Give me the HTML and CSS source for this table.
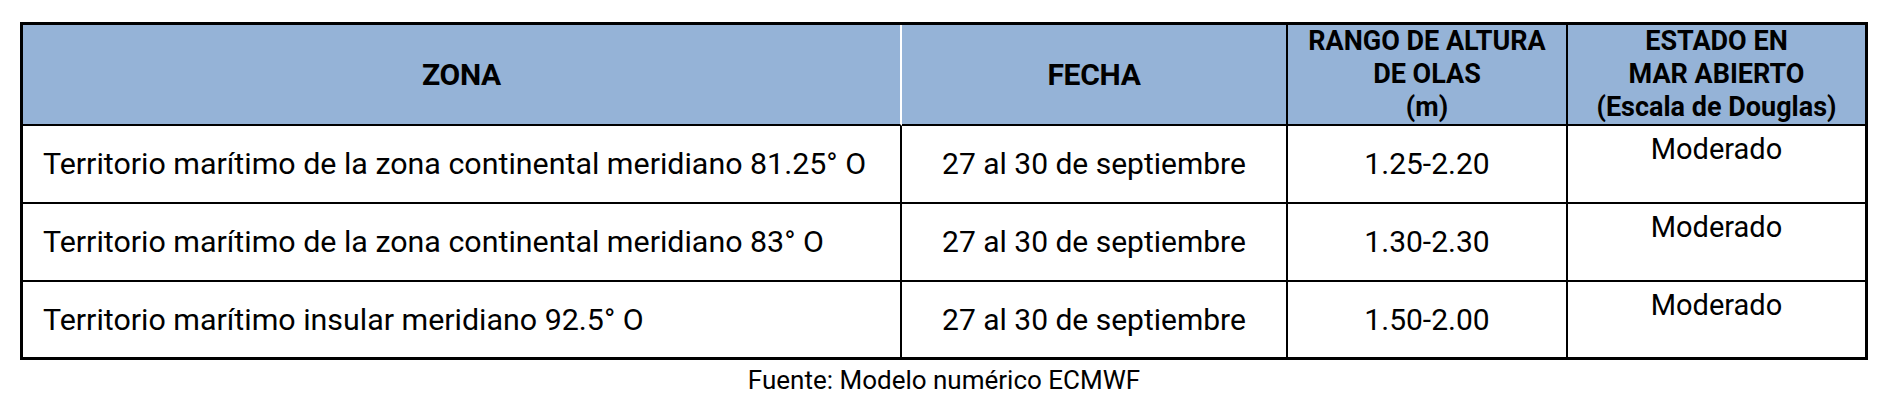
FILE: index.html
```html
<!DOCTYPE html>
<html lang="es">
<head>
<meta charset="utf-8">
<title>Altura de olas</title>
<link rel="stylesheet" href="styles.css">
</head>
<body>
<div class="wrap">
  <table class="waves">
    <colgroup>
      <col class="c-zona">
      <col class="c-fecha">
      <col class="c-rango">
      <col class="c-estado">
    </colgroup>
    <thead>
      <tr class="head-row">
        <th class="h-big h-zona">ZONA</th>
        <th class="h-big">FECHA</th>
        <th class="h-small">RANGO DE ALTURA<br>DE OLAS<br>(m)</th>
        <th class="h-small last">ESTADO EN<br>MAR ABIERTO<br>(Escala de Douglas)</th>
      </tr>
    </thead>
    <tbody>
      <tr class="data-row">
        <td class="zona">Territorio marítimo de la zona continental meridiano 81.25° O</td>
        <td class="center">27 al 30 de septiembre</td>
        <td class="center">1.25-2.20</td>
        <td class="estado last">Moderado</td>
      </tr>
      <tr class="data-row">
        <td class="zona">Territorio marítimo de la zona continental meridiano 83° O</td>
        <td class="center">27 al 30 de septiembre</td>
        <td class="center">1.30-2.30</td>
        <td class="estado last">Moderado</td>
      </tr>
      <tr class="data-row final">
        <td class="zona">Territorio marítimo insular meridiano 92.5° O</td>
        <td class="center">27 al 30 de septiembre</td>
        <td class="center">1.50-2.00</td>
        <td class="estado last">Moderado</td>
      </tr>
    </tbody>
  </table>
  <p class="source">Fuente: Modelo numérico ECMWF</p>
</div>
</body>
</html>
```
FILE: styles.css
```css
html, body {
  margin: 0;
  padding: 0;
  background: #ffffff;
}

body {
  padding: 22px 0 0 20px;
  font-family: Roboto, "Liberation Sans", Arial, sans-serif;
  color: #000000;
}

.wrap {
  width: 1848px;
}

.waves {
  width: 1848px;
  table-layout: fixed;
  border-collapse: separate;
  border-spacing: 0;
  border-top: 3px solid #000;
  border-left: 3px solid #000;
}

.c-zona { width: 879px; }
.c-fecha { width: 386px; }
.c-rango { width: 280px; }
.c-estado { width: 300px; }

.waves th,
.waves td {
  box-sizing: border-box;
  border-right: 2px solid #000;
  border-bottom: 2px solid #000;
  padding: 0;
}

.waves .last {
  border-right-width: 3px;
}

.head-row {
  height: 99px;
}

.waves th {
  background: #95b3d7;
  font-weight: 700;
  text-align: center;
  vertical-align: middle;
}

.waves th.h-zona {
  border-right-color: #ffffff;
}

.h-big {
  font-size: 30px;
  line-height: 36px;
  letter-spacing: -0.3px;
}

.h-small {
  font-size: 27px;
  line-height: 33px;
  padding-top: 1px;
}

.data-row {
  height: 78px;
}

.waves td {
  font-size: 30px;
  line-height: 36px;
  vertical-align: middle;
}

.waves .final td {
  border-bottom-width: 3px;
}

.waves td.zona {
  text-align: left;
  padding-left: 20px;
  font-size: 30.4px;
}

.center {
  text-align: center;
}

.waves td.estado {
  vertical-align: top;
  text-align: center;
  font-size: 29px;
  line-height: 34px;
  padding-top: 6px;
}

.source {
  margin: 5px 0 0 0;
  text-align: center;
  font-size: 26px;
  line-height: 31px;
}
```
